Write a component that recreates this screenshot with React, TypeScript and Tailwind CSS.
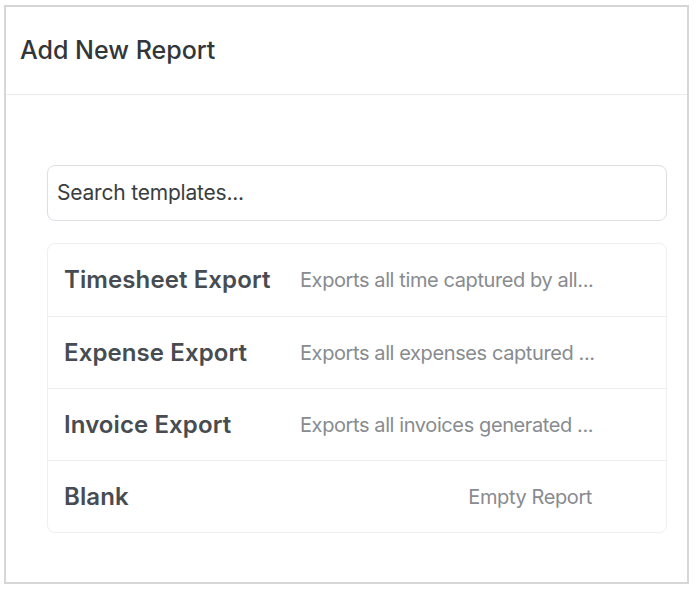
import React from "react";

const rows = [
  { title: "Timesheet Export", desc: "Exports all time captured by all..." },
  { title: "Expense Export", desc: "Exports all expenses captured ..." },
  { title: "Invoice Export", desc: "Exports all invoices generated ..." },
  { title: "Blank", desc: "Empty Report" },
];

export default function App() {
  return (
    <div className="bg-white w-[698px] h-[590px] pt-[5px] pl-[4px] font-['Inter','Noto_Sans',sans-serif]">
      <div className="w-[685px] h-[579px] border-2 border-[#d6d6d6] flex flex-col">
        <div className="h-[88px] border-b border-[#ececec] flex items-center pl-[14px]">
          <h1 className="text-[25px] font-medium text-[#333639] tracking-[0px]">Add New Report</h1>
        </div>
        <div className="flex flex-col pl-[41px] pr-[20px] pt-[70px]">
          <div className="h-[56px] rounded-lg border border-[#dcdfe3] flex items-center px-[9px]">
            <span className="text-[21px] text-[#3a3d40] tracking-[-0.2px]">Search templates...</span>
          </div>
          <div className="mt-[22px] rounded-lg border border-[#f0f0f0] flex flex-col">
            {rows.map((r, i) => (
              <div
                key={r.title}
                className={`h-[72px] flex items-center pl-[16px] ${i > 0 ? "border-t border-[#eeeeee]" : ""}`}
              >
                <div className="w-[236px] text-[24px] font-semibold text-[#474c52] tracking-[0.1px] whitespace-nowrap">{r.title}</div>
                <div className="w-[292px] text-right text-[20px] text-[#888b8f] tracking-[-0.4px] whitespace-nowrap">{r.desc}</div>
              </div>
            ))}
          </div>
        </div>
      </div>
    </div>
  );
}
